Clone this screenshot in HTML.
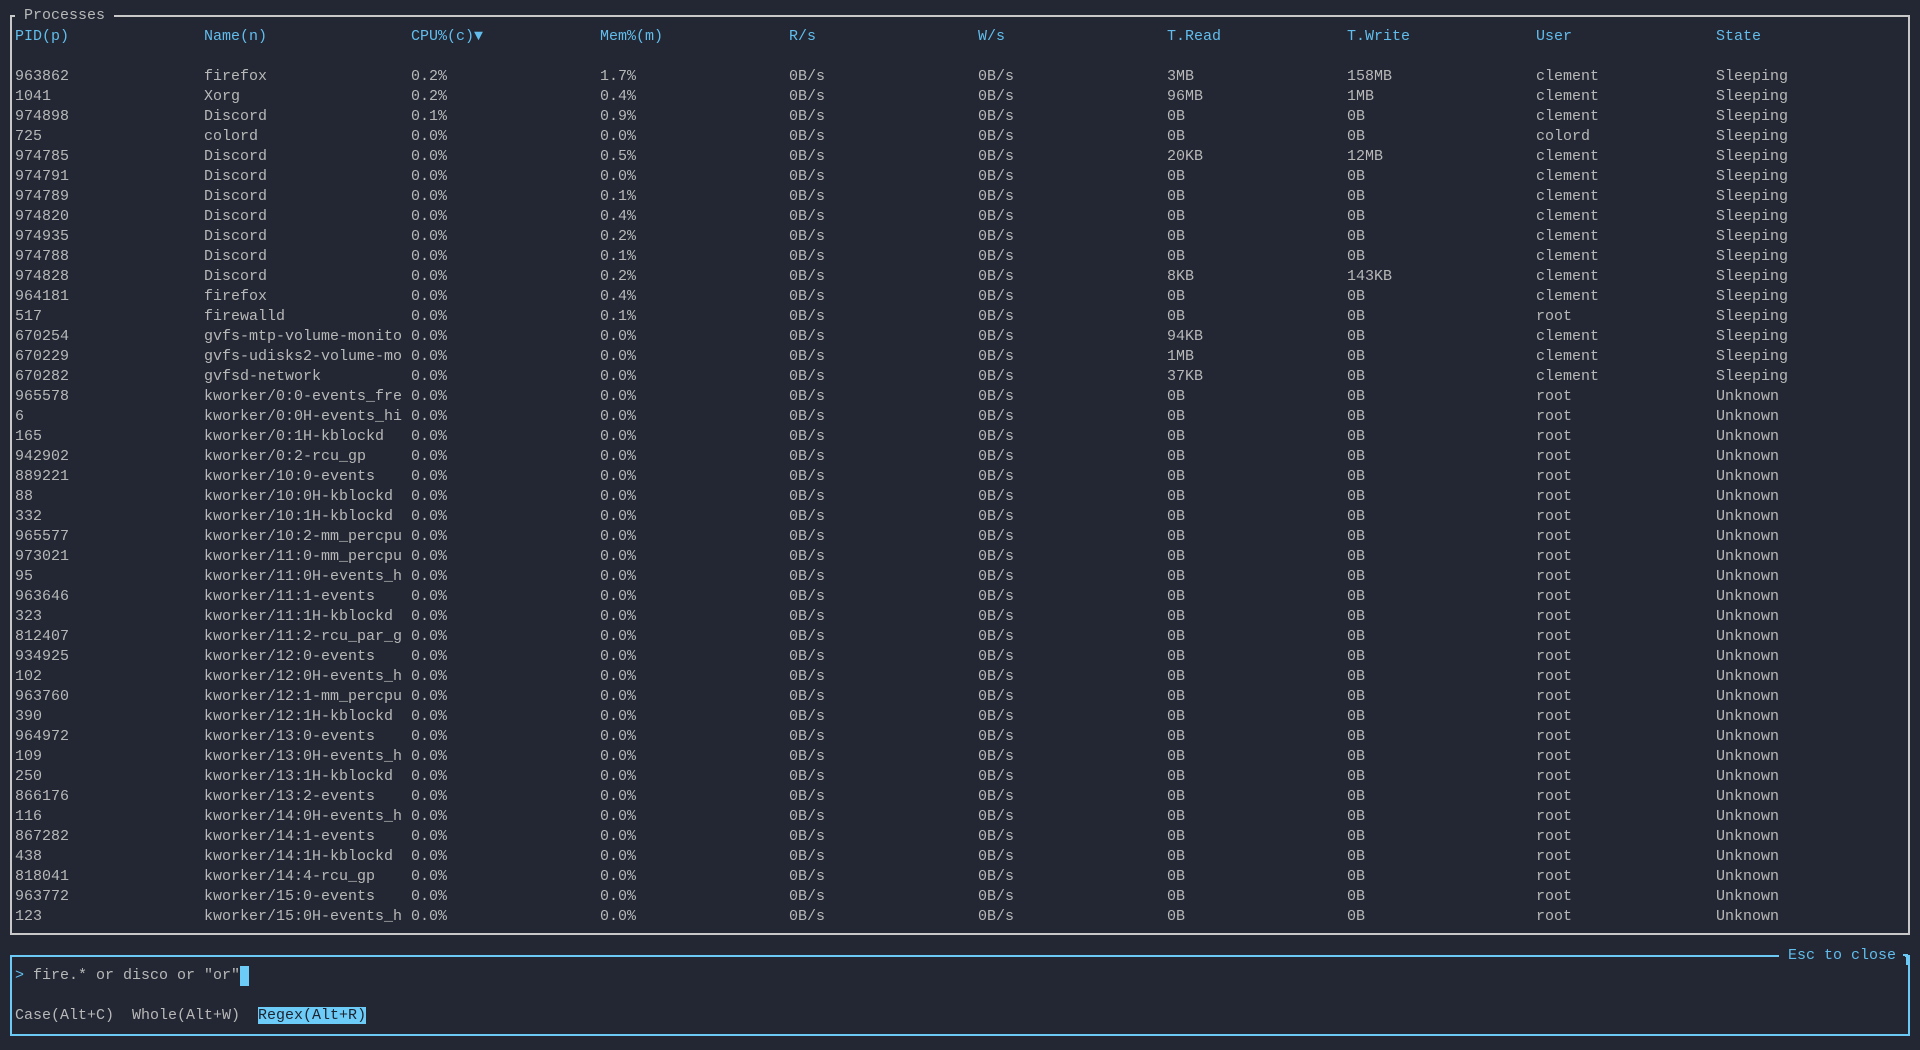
<!DOCTYPE html>
<html><head><meta charset="utf-8"><style>
html,body{margin:0;padding:0;background:#222733;width:1920px;height:1050px;overflow:hidden}
body{font-family:"Liberation Mono",monospace;font-size:15px;color:#b8b8b8;position:relative}
.t{position:absolute;left:15px;top:27px}
.r{height:20px;line-height:20px;white-space:nowrap}
.r span{display:inline-block;overflow:hidden;white-space:pre;vertical-align:top}
.r span:nth-child(1){width:189px}.r span:nth-child(2){width:207px}.r span:nth-child(3){width:189px}
.r span:nth-child(4){width:189px}.r span:nth-child(5){width:189px}.r span:nth-child(6){width:189px}
.r span:nth-child(7){width:180px}.r span:nth-child(8){width:189px}.r span:nth-child(9){width:180px}
.r span:nth-child(10){width:120px}
.h{color:#62bdec}
.b{position:absolute}
.abs{position:absolute;line-height:20px;white-space:pre}
</style></head><body>
<div class="b" style="left:10px;top:15px;width:1896px;height:916px;border:2px solid #c8c8c8"></div>
<div class="abs" style="left:15px;top:6px;background:#222733">&nbsp;Processes </div>
<div class="b" style="left:10px;top:955px;width:1896px;height:77px;border:2px solid #6cc8f5"></div>
<div class="abs" style="left:1779px;top:946px;background:#222733;color:#62bdec"> Esc to close </div>
<div class="b" style="left:1903px;top:954px;width:5px;height:2px;background:#6cc8f5"></div>
<div class="b" style="left:1906px;top:955px;width:2px;height:10px;background:#6cc8f5"></div>
<div class="abs" style="left:15px;top:966px"><span style="color:#62bdec">&gt;</span> fire.* or disco or "or"<span style="display:inline-block;width:9px;height:20px;background:#6ccbf7;vertical-align:top"></span></div>
<div class="abs" style="left:15px;top:1006px">Case(Alt+C)  Whole(Alt+W)  <span style="background:#6ccbf7;color:#1e2330">Regex(Alt+R)</span></div>
<div class="t">
<div class="r h"><span>PID(p)</span><span>Name(n)</span><span>CPU%(c)▼</span><span>Mem%(m)</span><span>R/s</span><span>W/s</span><span>T.Read</span><span>T.Write</span><span>User</span><span>State</span></div>
<div class="r"></div>
<div class="r"><span>963862</span><span>firefox</span><span>0.2%</span><span>1.7%</span><span>0B/s</span><span>0B/s</span><span>3MB</span><span>158MB</span><span>clement</span><span>Sleeping</span></div>
<div class="r"><span>1041</span><span>Xorg</span><span>0.2%</span><span>0.4%</span><span>0B/s</span><span>0B/s</span><span>96MB</span><span>1MB</span><span>clement</span><span>Sleeping</span></div>
<div class="r"><span>974898</span><span>Discord</span><span>0.1%</span><span>0.9%</span><span>0B/s</span><span>0B/s</span><span>0B</span><span>0B</span><span>clement</span><span>Sleeping</span></div>
<div class="r"><span>725</span><span>colord</span><span>0.0%</span><span>0.0%</span><span>0B/s</span><span>0B/s</span><span>0B</span><span>0B</span><span>colord</span><span>Sleeping</span></div>
<div class="r"><span>974785</span><span>Discord</span><span>0.0%</span><span>0.5%</span><span>0B/s</span><span>0B/s</span><span>20KB</span><span>12MB</span><span>clement</span><span>Sleeping</span></div>
<div class="r"><span>974791</span><span>Discord</span><span>0.0%</span><span>0.0%</span><span>0B/s</span><span>0B/s</span><span>0B</span><span>0B</span><span>clement</span><span>Sleeping</span></div>
<div class="r"><span>974789</span><span>Discord</span><span>0.0%</span><span>0.1%</span><span>0B/s</span><span>0B/s</span><span>0B</span><span>0B</span><span>clement</span><span>Sleeping</span></div>
<div class="r"><span>974820</span><span>Discord</span><span>0.0%</span><span>0.4%</span><span>0B/s</span><span>0B/s</span><span>0B</span><span>0B</span><span>clement</span><span>Sleeping</span></div>
<div class="r"><span>974935</span><span>Discord</span><span>0.0%</span><span>0.2%</span><span>0B/s</span><span>0B/s</span><span>0B</span><span>0B</span><span>clement</span><span>Sleeping</span></div>
<div class="r"><span>974788</span><span>Discord</span><span>0.0%</span><span>0.1%</span><span>0B/s</span><span>0B/s</span><span>0B</span><span>0B</span><span>clement</span><span>Sleeping</span></div>
<div class="r"><span>974828</span><span>Discord</span><span>0.0%</span><span>0.2%</span><span>0B/s</span><span>0B/s</span><span>8KB</span><span>143KB</span><span>clement</span><span>Sleeping</span></div>
<div class="r"><span>964181</span><span>firefox</span><span>0.0%</span><span>0.4%</span><span>0B/s</span><span>0B/s</span><span>0B</span><span>0B</span><span>clement</span><span>Sleeping</span></div>
<div class="r"><span>517</span><span>firewalld</span><span>0.0%</span><span>0.1%</span><span>0B/s</span><span>0B/s</span><span>0B</span><span>0B</span><span>root</span><span>Sleeping</span></div>
<div class="r"><span>670254</span><span>gvfs-mtp-volume-monito</span><span>0.0%</span><span>0.0%</span><span>0B/s</span><span>0B/s</span><span>94KB</span><span>0B</span><span>clement</span><span>Sleeping</span></div>
<div class="r"><span>670229</span><span>gvfs-udisks2-volume-mo</span><span>0.0%</span><span>0.0%</span><span>0B/s</span><span>0B/s</span><span>1MB</span><span>0B</span><span>clement</span><span>Sleeping</span></div>
<div class="r"><span>670282</span><span>gvfsd-network</span><span>0.0%</span><span>0.0%</span><span>0B/s</span><span>0B/s</span><span>37KB</span><span>0B</span><span>clement</span><span>Sleeping</span></div>
<div class="r"><span>965578</span><span>kworker/0:0-events_fre</span><span>0.0%</span><span>0.0%</span><span>0B/s</span><span>0B/s</span><span>0B</span><span>0B</span><span>root</span><span>Unknown</span></div>
<div class="r"><span>6</span><span>kworker/0:0H-events_hi</span><span>0.0%</span><span>0.0%</span><span>0B/s</span><span>0B/s</span><span>0B</span><span>0B</span><span>root</span><span>Unknown</span></div>
<div class="r"><span>165</span><span>kworker/0:1H-kblockd</span><span>0.0%</span><span>0.0%</span><span>0B/s</span><span>0B/s</span><span>0B</span><span>0B</span><span>root</span><span>Unknown</span></div>
<div class="r"><span>942902</span><span>kworker/0:2-rcu_gp</span><span>0.0%</span><span>0.0%</span><span>0B/s</span><span>0B/s</span><span>0B</span><span>0B</span><span>root</span><span>Unknown</span></div>
<div class="r"><span>889221</span><span>kworker/10:0-events</span><span>0.0%</span><span>0.0%</span><span>0B/s</span><span>0B/s</span><span>0B</span><span>0B</span><span>root</span><span>Unknown</span></div>
<div class="r"><span>88</span><span>kworker/10:0H-kblockd</span><span>0.0%</span><span>0.0%</span><span>0B/s</span><span>0B/s</span><span>0B</span><span>0B</span><span>root</span><span>Unknown</span></div>
<div class="r"><span>332</span><span>kworker/10:1H-kblockd</span><span>0.0%</span><span>0.0%</span><span>0B/s</span><span>0B/s</span><span>0B</span><span>0B</span><span>root</span><span>Unknown</span></div>
<div class="r"><span>965577</span><span>kworker/10:2-mm_percpu</span><span>0.0%</span><span>0.0%</span><span>0B/s</span><span>0B/s</span><span>0B</span><span>0B</span><span>root</span><span>Unknown</span></div>
<div class="r"><span>973021</span><span>kworker/11:0-mm_percpu</span><span>0.0%</span><span>0.0%</span><span>0B/s</span><span>0B/s</span><span>0B</span><span>0B</span><span>root</span><span>Unknown</span></div>
<div class="r"><span>95</span><span>kworker/11:0H-events_h</span><span>0.0%</span><span>0.0%</span><span>0B/s</span><span>0B/s</span><span>0B</span><span>0B</span><span>root</span><span>Unknown</span></div>
<div class="r"><span>963646</span><span>kworker/11:1-events</span><span>0.0%</span><span>0.0%</span><span>0B/s</span><span>0B/s</span><span>0B</span><span>0B</span><span>root</span><span>Unknown</span></div>
<div class="r"><span>323</span><span>kworker/11:1H-kblockd</span><span>0.0%</span><span>0.0%</span><span>0B/s</span><span>0B/s</span><span>0B</span><span>0B</span><span>root</span><span>Unknown</span></div>
<div class="r"><span>812407</span><span>kworker/11:2-rcu_par_g</span><span>0.0%</span><span>0.0%</span><span>0B/s</span><span>0B/s</span><span>0B</span><span>0B</span><span>root</span><span>Unknown</span></div>
<div class="r"><span>934925</span><span>kworker/12:0-events</span><span>0.0%</span><span>0.0%</span><span>0B/s</span><span>0B/s</span><span>0B</span><span>0B</span><span>root</span><span>Unknown</span></div>
<div class="r"><span>102</span><span>kworker/12:0H-events_h</span><span>0.0%</span><span>0.0%</span><span>0B/s</span><span>0B/s</span><span>0B</span><span>0B</span><span>root</span><span>Unknown</span></div>
<div class="r"><span>963760</span><span>kworker/12:1-mm_percpu</span><span>0.0%</span><span>0.0%</span><span>0B/s</span><span>0B/s</span><span>0B</span><span>0B</span><span>root</span><span>Unknown</span></div>
<div class="r"><span>390</span><span>kworker/12:1H-kblockd</span><span>0.0%</span><span>0.0%</span><span>0B/s</span><span>0B/s</span><span>0B</span><span>0B</span><span>root</span><span>Unknown</span></div>
<div class="r"><span>964972</span><span>kworker/13:0-events</span><span>0.0%</span><span>0.0%</span><span>0B/s</span><span>0B/s</span><span>0B</span><span>0B</span><span>root</span><span>Unknown</span></div>
<div class="r"><span>109</span><span>kworker/13:0H-events_h</span><span>0.0%</span><span>0.0%</span><span>0B/s</span><span>0B/s</span><span>0B</span><span>0B</span><span>root</span><span>Unknown</span></div>
<div class="r"><span>250</span><span>kworker/13:1H-kblockd</span><span>0.0%</span><span>0.0%</span><span>0B/s</span><span>0B/s</span><span>0B</span><span>0B</span><span>root</span><span>Unknown</span></div>
<div class="r"><span>866176</span><span>kworker/13:2-events</span><span>0.0%</span><span>0.0%</span><span>0B/s</span><span>0B/s</span><span>0B</span><span>0B</span><span>root</span><span>Unknown</span></div>
<div class="r"><span>116</span><span>kworker/14:0H-events_h</span><span>0.0%</span><span>0.0%</span><span>0B/s</span><span>0B/s</span><span>0B</span><span>0B</span><span>root</span><span>Unknown</span></div>
<div class="r"><span>867282</span><span>kworker/14:1-events</span><span>0.0%</span><span>0.0%</span><span>0B/s</span><span>0B/s</span><span>0B</span><span>0B</span><span>root</span><span>Unknown</span></div>
<div class="r"><span>438</span><span>kworker/14:1H-kblockd</span><span>0.0%</span><span>0.0%</span><span>0B/s</span><span>0B/s</span><span>0B</span><span>0B</span><span>root</span><span>Unknown</span></div>
<div class="r"><span>818041</span><span>kworker/14:4-rcu_gp</span><span>0.0%</span><span>0.0%</span><span>0B/s</span><span>0B/s</span><span>0B</span><span>0B</span><span>root</span><span>Unknown</span></div>
<div class="r"><span>963772</span><span>kworker/15:0-events</span><span>0.0%</span><span>0.0%</span><span>0B/s</span><span>0B/s</span><span>0B</span><span>0B</span><span>root</span><span>Unknown</span></div>
<div class="r"><span>123</span><span>kworker/15:0H-events_h</span><span>0.0%</span><span>0.0%</span><span>0B/s</span><span>0B/s</span><span>0B</span><span>0B</span><span>root</span><span>Unknown</span></div>
</div>
</body></html>
